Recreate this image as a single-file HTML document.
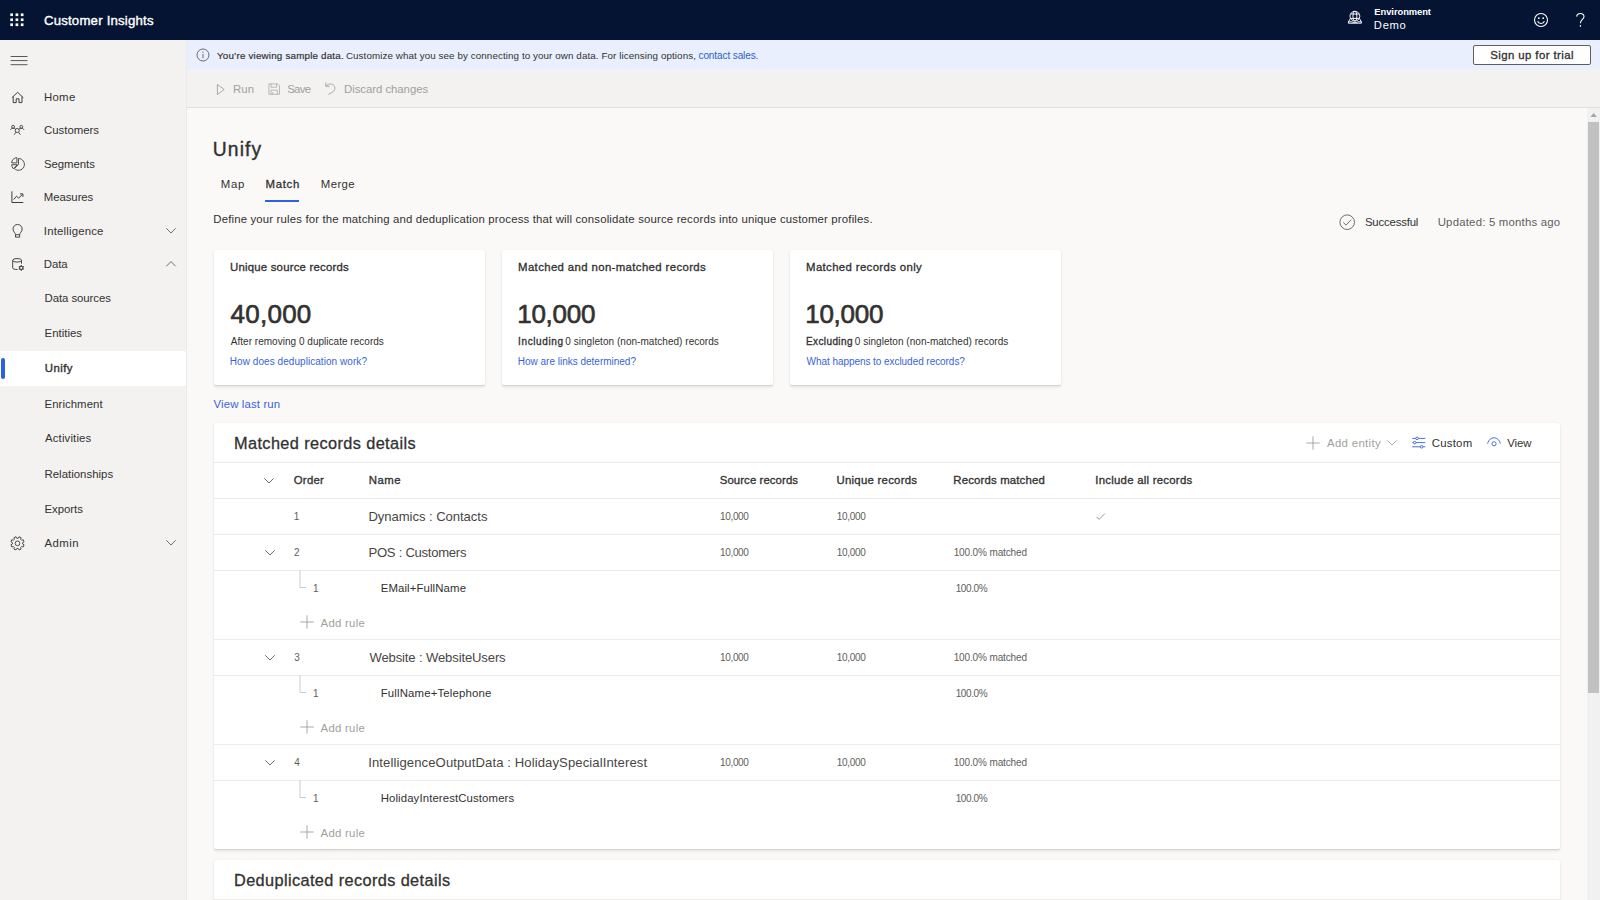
<!DOCTYPE html>
<html><head><meta charset="utf-8"><title>Customer Insights - Unify</title>
<style>
html,body{margin:0;padding:0;width:1600px;height:900px;overflow:hidden;background:#faf9f8;font-family:"Liberation Sans",sans-serif;}
.t{position:absolute;white-space:nowrap;line-height:20px;height:20px;}
.b{position:absolute;}
.i{position:absolute;overflow:visible;}
</style></head><body>
<div class="b" style="left:0px;top:0px;width:1600px;height:40px;background:#041432"></div>
<div class="b" style="left:0px;top:40px;width:187px;height:860px;background:#f3f2f1"></div>
<div class="b" style="left:186px;top:40px;width:1px;height:860px;background:#eceae8"></div>
<div class="b" style="left:187px;top:40px;width:1413px;height:30px;background:#e9effd"></div>
<div class="b" style="left:187px;top:70px;width:1413px;height:37px;background:#f3f2f1"></div>
<div class="b" style="left:187px;top:107px;width:1413px;height:1px;background:#e1dfdd"></div>
<div class="b" style="left:187px;top:108px;width:1413px;height:792px;background:#faf9f8"></div>
<svg class="i" style="left:0px;top:0px" width="40" height="40" viewBox="0 0 40 40" fill="#fff" stroke="none" stroke-width="1" stroke-linecap="butt" stroke-linejoin="miter"><rect x="10.30" y="13.40" width="2.7" height="2.7"/><rect x="10.30" y="18.40" width="2.7" height="2.7"/><rect x="10.30" y="23.40" width="2.7" height="2.7"/><rect x="15.55" y="13.40" width="2.7" height="2.7"/><rect x="15.55" y="18.40" width="2.7" height="2.7"/><rect x="15.55" y="23.40" width="2.7" height="2.7"/><rect x="20.80" y="13.40" width="2.7" height="2.7"/><rect x="20.80" y="18.40" width="2.7" height="2.7"/><rect x="20.80" y="23.40" width="2.7" height="2.7"/></svg>
<div class="t" id="hdr" style="left:43.90px;top:11.43px;font-size:13.2px;color:#fff;letter-spacing:0.213px;-webkit-text-stroke:.38px currentColor;">Customer Insights</div>
<svg class="i" style="left:1347.5px;top:10.5px" width="14" height="13" viewBox="0 0 14 13" fill="none" stroke="#fff" stroke-width="0.95" stroke-linecap="butt" stroke-linejoin="miter"><circle cx="6.9" cy="5.2" r="4.9"/><ellipse cx="6.9" cy="5.2" rx="2" ry="4.9"/><path d="M2.6 3 H11.2 M2.6 7.4 H11.2"/><path d="M2.3 7.6 L0.4 10.8 V12.2 H13.4 V10.8 L11.5 7.6 M0.4 10.8 H3.9 C5 12 8.8 12 9.9 10.8 H13.4"/></svg>
<div class="t" id="env1" style="left:1374.35px;top:1.94px;font-size:9.4px;color:#fff;letter-spacing:-0.065px;font-weight:bold;">Environment</div>
<div class="t" id="env2" style="left:1373.85px;top:15.12px;font-size:11.2px;color:#fff;letter-spacing:0.717px;">Demo</div>
<svg class="i" style="left:1532.7px;top:12px" width="16" height="16" viewBox="0 0 16 16" fill="none" stroke="#fff" stroke-width="1.1" stroke-linecap="butt" stroke-linejoin="miter"><circle cx="8" cy="8" r="6.5"/><path d="M4.6 9.2 C5.6 12.2 10.4 12.2 11.4 9.2" /><circle cx="5.8" cy="6.2" r="0.9" fill="#fff" stroke="none"/><circle cx="10.2" cy="6.2" r="0.9" fill="#fff" stroke="none"/></svg>
<svg class="i" style="left:1576.2px;top:13.2px" width="9" height="14" viewBox="0 0 9 14" fill="none" stroke="#fff" stroke-width="1.1" stroke-linecap="butt" stroke-linejoin="miter"><path d="M0.7 3.6 C0.9 -0.5 8 -0.5 8 3.4 C8 6.3 4.4 6.6 4.4 10.2"/><path d="M4.4 12.1 V13.7"/></svg>
<svg class="i" style="left:10px;top:55px" width="18" height="11" viewBox="0 0 18 11" fill="none" stroke="#484644" stroke-width="0.9" stroke-linecap="butt" stroke-linejoin="miter"><path d="M0.6 1.5H17.5M0.6 5.6H17.5M0.6 9.7H17.5"/></svg>
<div class="b" style="left:0px;top:351px;width:186px;height:35px;background:#fff;border-radius:0 2px 2px 0"></div>
<div class="b" style="left:1.3px;top:358px;width:3.6px;height:20.5px;background:#2a61df;border-radius:2px"></div>
<div class="t" id="nHome" style="left:43.90px;top:86.75px;font-size:11.4px;color:#323130;letter-spacing:0.333px;">Home</div>
<div class="t" id="nCust" style="left:43.95px;top:120.45px;font-size:11.4px;color:#323130;letter-spacing:0.006px;">Customers</div>
<div class="t" id="nSeg" style="left:43.95px;top:153.65px;font-size:11.4px;color:#323130;letter-spacing:-0.050px;">Segments</div>
<div class="t" id="nMea" style="left:43.80px;top:187.05px;font-size:11.4px;color:#323130;letter-spacing:-0.071px;">Measures</div>
<div class="t" id="nInt" style="left:43.80px;top:220.65px;font-size:11.4px;color:#323130;letter-spacing:0.182px;">Intelligence</div>
<div class="t" id="nData" style="left:43.80px;top:253.95px;font-size:11.4px;color:#323130;letter-spacing:-0.050px;">Data</div>
<div class="t" id="sDs" style="left:44.50px;top:288.35px;font-size:11.4px;color:#323130;letter-spacing:-0.064px;">Data sources</div>
<div class="t" id="sEnt" style="left:44.50px;top:323.45px;font-size:11.4px;color:#323130;letter-spacing:0.029px;">Entities</div>
<div class="t" id="sEnr" style="left:44.50px;top:393.55px;font-size:11.4px;color:#323130;letter-spacing:0.056px;">Enrichment</div>
<div class="t" id="sAct" style="left:45.00px;top:427.55px;font-size:11.4px;color:#323130;letter-spacing:0.144px;">Activities</div>
<div class="t" id="sRel" style="left:44.50px;top:463.55px;font-size:11.4px;color:#323130;letter-spacing:0.021px;">Relationships</div>
<div class="t" id="sExp" style="left:44.50px;top:498.75px;font-size:11.4px;color:#323130;letter-spacing:-0.042px;">Exports</div>
<div class="t" id="sUni" style="left:44.75px;top:358.25px;font-size:11.4px;color:#323130;letter-spacing:0.438px;-webkit-text-stroke:.38px currentColor;">Unify</div>
<div class="t" id="nAdm" style="left:44.45px;top:532.65px;font-size:11.4px;color:#323130;letter-spacing:0.438px;">Admin</div>
<svg class="i" style="left:10.5px;top:91px" width="14" height="13" viewBox="0 0 14 13" fill="none" stroke="#403e3c" stroke-width="1" stroke-linecap="butt" stroke-linejoin="miter"><path d="M0.9 6.7 L6.6 1.3 L12.3 6.7"/><path d="M2.2 5.6 V11.6 H5.2 V7.8 H8 V11.6 H11 V5.6"/></svg>
<svg class="i" style="left:10px;top:124px" width="15" height="12" viewBox="0 0 15 12" fill="none" stroke="#403e3c" stroke-width="0.9" stroke-linecap="butt" stroke-linejoin="miter"><circle cx="3.1" cy="2.8" r="1.45"/><circle cx="11.3" cy="2.8" r="1.45"/><path d="M0.4 5.7 C0.9 4.7 1.9 4.3 3.1 4.3 C4.2 4.3 5 4.6 5.7 5.2 M14 5.7 C13.5 4.7 12.5 4.3 11.3 4.3 C10.2 4.3 9.4 4.6 8.7 5.2"/><circle cx="7.2" cy="6.5" r="2.05"/><path d="M5.9 8.2 L4.2 10.7 M8.5 8.2 L10.4 10.7"/></svg>
<svg class="i" style="left:9.6px;top:156.6px" width="15" height="14" viewBox="0 0 15 14" fill="none" stroke="#403e3c" stroke-width="0.9" stroke-linecap="butt" stroke-linejoin="miter"><path d="M8.5 7.4 V1.5 A5.9 5.9 0 1 1 4.33 11.57 Z"/><path d="M7.4 7.7 H1.7 A5.8 5.8 0 0 0 3.35 11.75 Z"/><path d="M6.9 5.9 V0.7 A5.2 5.2 0 0 0 1.7 5.9 Z"/></svg>
<svg class="i" style="left:10.6px;top:190.8px" width="13" height="12.5" viewBox="0 0 13 12.5" fill="none" stroke="#403e3c" stroke-width="1" stroke-linecap="butt" stroke-linejoin="miter"><path d="M0.9 0.3 V11.5 H12.3"/><path d="M2.6 8.6 L5.6 5.2 L7.7 7.2 L11.6 3.2"/><path d="M8.9 2.9 H11.9 V5.9"/></svg>
<svg class="i" style="left:11.5px;top:224.0px" width="11.5" height="14" viewBox="0 0 11.5 14" fill="none" stroke="#403e3c" stroke-width="0.95" stroke-linecap="butt" stroke-linejoin="miter"><path d="M3.5 10.6 C3.5 8.8 1.05 7.9 1.05 5.0 A4.55 4.55 0 0 1 10.15 5.0 C10.15 7.9 7.7 8.8 7.7 10.6 V13.1 H3.5 Z"/><path d="M3.5 10.7 H7.7"/></svg>
<svg class="i" style="left:11.8px;top:257.8px" width="13" height="13.5" viewBox="0 0 13 13.5" fill="none" stroke="#403e3c" stroke-width="0.95" stroke-linecap="butt" stroke-linejoin="miter"><ellipse cx="5.1" cy="2.3" rx="4.4" ry="1.8"/><path d="M0.7 2.3 V9.9 C0.7 10.9 2.6 11.6 5.6 11.5 M9.5 2.3 V5.7"/><path d="M11.36 10.29 L12.06 10.80 L11.46 11.84 L10.67 11.49 L9.99 11.88 L9.90 12.74 L8.70 12.74 L8.61 11.88 L7.93 11.49 L7.14 11.84 L6.54 10.80 L7.24 10.29 L7.24 9.51 L6.54 9.00 L7.14 7.96 L7.93 8.31 L8.61 7.92 L8.70 7.06 L9.90 7.06 L9.99 7.92 L10.67 8.31 L11.46 7.96 L12.06 9.00 L11.36 9.51 Z M8.20 9.90 a1.1 1.1 0 1 0 2.2 0 a1.1 1.1 0 1 0 -2.2 0 Z" fill="#403e3c" stroke="none" fill-rule="evenodd"/></svg>
<svg class="i" style="left:9.7px;top:535.5px" width="15" height="15" viewBox="0 0 15 15" fill="none" stroke="#403e3c" stroke-width="0.9" stroke-linecap="butt" stroke-linejoin="miter"><path d="M12.60 8.04 L14.09 8.82 L13.20 10.97 L11.59 10.47 L10.62 11.44 L11.12 13.05 L8.97 13.94 L8.19 12.45 L6.81 12.45 L6.03 13.94 L3.88 13.05 L4.38 11.44 L3.41 10.47 L1.80 10.97 L0.91 8.82 L2.40 8.04 L2.40 6.66 L0.91 5.88 L1.80 3.73 L3.41 4.23 L4.38 3.26 L3.88 1.65 L6.03 0.76 L6.81 2.25 L8.19 2.25 L8.97 0.76 L11.12 1.65 L10.62 3.26 L11.59 4.23 L13.20 3.73 L14.09 5.88 L12.60 6.66 Z" stroke-linejoin="round"/><circle cx="7.5" cy="7.35" r="2.35"/></svg>
<svg class="i" style="left:165px;top:227px" width="12" height="8" viewBox="0 0 12 8" fill="none" stroke="#605e5c" stroke-width="0.9" stroke-linecap="butt" stroke-linejoin="miter"><path d="M1.3 1.3 L6 6 L10.7 1.3"/></svg>
<svg class="i" style="left:165px;top:260.2px" width="12" height="8" viewBox="0 0 12 8" fill="none" stroke="#605e5c" stroke-width="0.9" stroke-linecap="butt" stroke-linejoin="miter"><path d="M1.3 6.3 L6 1.6 L10.7 6.3"/></svg>
<svg class="i" style="left:165px;top:539.2px" width="12" height="8" viewBox="0 0 12 8" fill="none" stroke="#605e5c" stroke-width="0.9" stroke-linecap="butt" stroke-linejoin="miter"><path d="M1.3 1.3 L6 6 L10.7 1.3"/></svg>
<svg class="i" style="left:195.8px;top:48px" width="14" height="14" viewBox="0 0 14 14" fill="none" stroke="#605e5c" stroke-width="0.9" stroke-linecap="butt" stroke-linejoin="miter"><circle cx="7" cy="7" r="6"/><path d="M7 6 V10.3 M7 3.7 V4.9"/></svg>
<div class="t" id="bn1" style="left:217.00px;top:45.60px;font-size:9.8px;color:#323130;letter-spacing:0.192px;-webkit-text-stroke:.18px currentColor;">You&#8217;re viewing sample data.</div>
<div class="t" id="bn2" style="left:345.90px;top:45.60px;font-size:9.8px;color:#323130;letter-spacing:0.091px;">Customize what you see by connecting to your own data. For licensing options,</div>
<div class="t" id="bn3" style="left:698.50px;top:45.53px;font-size:10px;color:#2b62c8;letter-spacing:-0.096px;">contact sales.</div>
<div class="b" style="left:1473px;top:45px;width:118px;height:19.5px;background:#fff;border:1px solid #605e5c;border-radius:2px;box-sizing:border-box"></div>
<div class="t" id="bn4" style="left:1490.30px;top:45.05px;font-size:11.4px;color:#323130;letter-spacing:0.409px;-webkit-text-stroke:.32px currentColor;">Sign up for trial</div>
<svg class="i" style="left:216px;top:82.5px" width="10" height="13" viewBox="0 0 10 13" fill="none" stroke="#a19f9d" stroke-width="0.9" stroke-linecap="butt" stroke-linejoin="miter"><path d="M1.4 1.4 L8.2 6.5 L1.4 11.6 Z"/></svg>
<div class="t" id="tbRun" style="left:232.90px;top:78.95px;font-size:11.4px;color:#a19f9d;letter-spacing:0.200px;">Run</div>
<svg class="i" style="left:267.6px;top:83px" width="12.5" height="12.5" viewBox="0 0 12.5 12.5" fill="none" stroke="#b3b0ad" stroke-width="0.9" stroke-linecap="butt" stroke-linejoin="miter"><path d="M0.9 0.9 H9.6 L11.5 2.8 V11.3 H0.9 Z"/><path d="M3 0.9 V4.2 H8.7 V0.9 M3 11.3 V7.2 H9.4 V11.3 M4.8 9 V11.3"/></svg>
<div class="t" id="tbSave" style="left:287.15px;top:78.95px;font-size:11.4px;color:#a19f9d;letter-spacing:-0.650px;">Save</div>
<svg class="i" style="left:325.3px;top:82px" width="11" height="13" viewBox="0 0 11 13" fill="none" stroke="#a19f9d" stroke-width="0.9" stroke-linecap="butt" stroke-linejoin="miter"><path d="M0.8 0.5 V4.3 H4.6"/><path d="M1 4.1 C3.6 0.6 9.9 1.6 9.9 6.2 C9.9 9 7.2 10.6 3.4 12.3"/></svg>
<div class="t" id="tbDis" style="left:344.00px;top:78.95px;font-size:11.4px;color:#a19f9d;letter-spacing:-0.050px;">Discard changes</div>
<div class="t" id="title" style="left:212.75px;top:130.21px;font-size:19.3px;color:#323130;letter-spacing:1.125px;-webkit-text-stroke:.38px currentColor;line-height:40px;height:40px;">Unify</div>
<div class="t" id="tabMap" style="left:220.80px;top:174.25px;font-size:11.4px;color:#323130;letter-spacing:0.750px;">Map</div>
<div class="t" id="tabMatch" style="left:265.60px;top:174.25px;font-size:11.4px;color:#323130;letter-spacing:0.675px;-webkit-text-stroke:.3px currentColor;">Match</div>
<div class="t" id="tabMerge" style="left:320.75px;top:174.25px;font-size:11.4px;color:#323130;letter-spacing:0.413px;">Merge</div>
<div class="b" style="left:265.4px;top:200px;width:34.1px;height:2px;background:#2a62e0"></div>
<div class="t" id="desc" style="left:213.25px;top:208.95px;font-size:11.4px;color:#323130;letter-spacing:0.161px;">Define your rules for the matching and deduplication process that will consolidate source records into unique customer profiles.</div>
<svg class="i" style="left:1339.3px;top:213.8px" width="16.4" height="16.4" viewBox="0 0 16.4 16.4" fill="none" stroke="#605e5c" stroke-width="0.9" stroke-linecap="butt" stroke-linejoin="miter"><circle cx="8.2" cy="8.2" r="7.3"/><path d="M4.2 8.4 L7.0 11.1 L12.3 5.7"/></svg>
<div class="t" id="stSucc" style="left:1364.90px;top:212.35px;font-size:11.4px;color:#323130;letter-spacing:-0.183px;">Successful</div>
<div class="t" id="stUpd" style="left:1437.70px;top:212.35px;font-size:11.4px;color:#605e5c;letter-spacing:0.203px;">Updated: 5 months ago</div>
<div class="b" style="left:214px;top:250px;width:271px;height:135px;background:#fff;border-radius:2px;box-shadow:0 1.3px 3px rgba(0,0,0,.10),0 .3px .8px rgba(0,0,0,.08);"></div>
<div class="t" id="c0t" style="left:230.05px;top:257.05px;font-size:11.4px;color:#323130;letter-spacing:0.200px;-webkit-text-stroke:.32px currentColor;">Unique source records</div>
<div class="t" id="c0n" style="left:230.55px;top:294.39px;font-size:26.0px;color:#323130;letter-spacing:0.250px;-webkit-text-stroke:.65px currentColor;line-height:40px;height:40px;">40,000</div>
<div class="t" id="c0s0" style="left:230.80px;top:331.53px;font-size:10px;color:#323130;letter-spacing:0.023px;">After removing 0 duplicate records</div>
<div class="t" id="c0l" style="left:229.80px;top:351.53px;font-size:10px;color:#3a63d8;letter-spacing:0.056px;">How does deduplication work?</div>
<div class="b" style="left:502px;top:250px;width:271px;height:135px;background:#fff;border-radius:2px;box-shadow:0 1.3px 3px rgba(0,0,0,.10),0 .3px .8px rgba(0,0,0,.08);"></div>
<div class="t" id="c1t" style="left:518.05px;top:257.05px;font-size:11.4px;color:#323130;letter-spacing:0.367px;-webkit-text-stroke:.32px currentColor;">Matched and non-matched records</div>
<div class="t" id="c1n" style="left:517.20px;top:294.39px;font-size:26.0px;color:#323130;letter-spacing:-0.250px;-webkit-text-stroke:.65px currentColor;line-height:40px;height:40px;">10,000</div>
<div class="t" id="c1s0" style="left:518.05px;top:331.53px;font-size:10px;color:#323130;letter-spacing:0.625px;-webkit-text-stroke:.32px currentColor;">Including</div>
<div class="t" id="c1s1" style="left:565.30px;top:331.53px;font-size:10px;color:#323130;letter-spacing:0.039px;">0 singleton (non-matched) records</div>
<div class="t" id="c1l" style="left:517.80px;top:351.53px;font-size:10px;color:#3a63d8;letter-spacing:-0.010px;">How are links determined?</div>
<div class="b" style="left:790px;top:250px;width:271px;height:135px;background:#fff;border-radius:2px;box-shadow:0 1.3px 3px rgba(0,0,0,.10),0 .3px .8px rgba(0,0,0,.08);"></div>
<div class="t" id="c2t" style="left:806.05px;top:257.05px;font-size:11.4px;color:#323130;letter-spacing:0.358px;-webkit-text-stroke:.32px currentColor;">Matched records only</div>
<div class="t" id="c2n" style="left:805.20px;top:294.39px;font-size:26.0px;color:#323130;letter-spacing:-0.250px;-webkit-text-stroke:.65px currentColor;line-height:40px;height:40px;">10,000</div>
<div class="t" id="c2s0" style="left:806.05px;top:331.53px;font-size:10px;color:#323130;letter-spacing:0.381px;-webkit-text-stroke:.32px currentColor;">Excluding</div>
<div class="t" id="c2s1" style="left:854.75px;top:331.53px;font-size:10px;color:#323130;letter-spacing:0.039px;">0 singleton (non-matched) records</div>
<div class="t" id="c2l" style="left:806.55px;top:351.53px;font-size:10px;color:#3a63d8;letter-spacing:-0.055px;">What happens to excluded records?</div>
<div class="t" id="vlr" style="left:213.55px;top:394.05px;font-size:11.4px;color:#3a63d8;letter-spacing:0.133px;">View last run</div>
<div class="b" style="left:214px;top:423px;width:1346px;height:426px;background:#fff;border-radius:2px;box-shadow:0 1.3px 3px rgba(0,0,0,.10),0 .3px .8px rgba(0,0,0,.08);"></div>
<div class="t" id="mrd" style="left:234.00px;top:422.75px;font-size:16.3px;color:#323130;letter-spacing:0.400px;-webkit-text-stroke:.3px currentColor;line-height:40px;height:40px;">Matched records details</div>
<div class="b" style="left:214px;top:462px;width:1346px;height:1px;background:#edebe9"></div>
<div class="b" style="left:214px;top:498px;width:1346px;height:1px;background:#edebe9"></div>
<div class="b" style="left:214px;top:534px;width:1346px;height:1px;background:#edebe9"></div>
<div class="b" style="left:214px;top:570px;width:1346px;height:1px;background:#edebe9"></div>
<div class="b" style="left:214px;top:639px;width:1346px;height:1px;background:#edebe9"></div>
<div class="b" style="left:214px;top:675px;width:1346px;height:1px;background:#edebe9"></div>
<div class="b" style="left:214px;top:744px;width:1346px;height:1px;background:#edebe9"></div>
<div class="b" style="left:214px;top:780px;width:1346px;height:1px;background:#edebe9"></div>
<svg class="i" style="left:1306px;top:436px" width="14" height="14" viewBox="0 0 14 14" fill="none" stroke="#a19f9d" stroke-width="0.9" stroke-linecap="butt" stroke-linejoin="miter"><path d="M7 0.3 V13.7 M0.3 7 H13.7"/></svg>
<div class="t" id="addEnt" style="left:1327.00px;top:432.85px;font-size:11.4px;color:#a19f9d;letter-spacing:0.328px;">Add entity</div>
<svg class="i" style="left:1386px;top:439px" width="12" height="8" viewBox="0 0 12 8" fill="none" stroke="#a19f9d" stroke-width="0.9" stroke-linecap="butt" stroke-linejoin="miter"><path d="M1.3 1.3 L6 6 L10.7 1.3"/></svg>
<svg class="i" style="left:1412px;top:436px" width="13.6" height="13" viewBox="0 0 13.6 13" fill="none" stroke="#3a63d8" stroke-width="0.9" stroke-linecap="butt" stroke-linejoin="miter"><path d="M0.3 2.4 H13.3 M0.3 6.6 H13.3 M0.3 10.8 H13.3"/><circle cx="5.1" cy="2.4" r="1.3" fill="#fff"/><circle cx="2.7" cy="6.6" r="1.3" fill="#fff"/><circle cx="9.6" cy="10.8" r="1.3" fill="#fff"/></svg>
<div class="t" id="custom" style="left:1431.85px;top:432.85px;font-size:11.4px;color:#323130;letter-spacing:0.210px;">Custom</div>
<svg class="i" style="left:1486.5px;top:436.6px" width="14" height="12" viewBox="0 0 14 12" fill="none" stroke="#3a63d8" stroke-width="0.9" stroke-linecap="butt" stroke-linejoin="miter"><path d="M0.6 6.6 C1.6 2.6 4.4 0.8 7 0.8 C9.6 0.8 12.4 2.6 13.4 6.6"/><circle cx="7" cy="6.8" r="2.1"/></svg>
<div class="t" id="view" style="left:1507.35px;top:432.85px;font-size:11.4px;color:#323130;letter-spacing:-0.150px;">View</div>
<svg class="i" style="left:263px;top:477px" width="12" height="8" viewBox="0 0 12 8" fill="none" stroke="#605e5c" stroke-width="0.9" stroke-linecap="butt" stroke-linejoin="miter"><path d="M1.3 1.3 L6 6 L10.7 1.3"/></svg>
<div class="t" id="hOrder" style="left:293.75px;top:469.55px;font-size:11.4px;color:#323130;letter-spacing:0.250px;-webkit-text-stroke:.32px currentColor;">Order</div>
<div class="t" id="hName" style="left:368.70px;top:469.55px;font-size:11.4px;color:#323130;letter-spacing:0.500px;-webkit-text-stroke:.32px currentColor;">Name</div>
<div class="t" id="hSrc" style="left:719.75px;top:469.55px;font-size:11.4px;color:#323130;letter-spacing:0.077px;-webkit-text-stroke:.32px currentColor;">Source records</div>
<div class="t" id="hUni" style="left:836.50px;top:469.55px;font-size:11.4px;color:#323130;letter-spacing:0.250px;-webkit-text-stroke:.32px currentColor;">Unique records</div>
<div class="t" id="hRec" style="left:953.25px;top:469.55px;font-size:11.4px;color:#323130;letter-spacing:0.164px;-webkit-text-stroke:.32px currentColor;">Records matched</div>
<div class="t" id="hInc" style="left:1095.25px;top:469.55px;font-size:11.4px;color:#323130;letter-spacing:0.250px;-webkit-text-stroke:.32px currentColor;">Include all records</div>
<div class="t" id="r498n" style="left:293.70px;top:507.33px;font-size:10px;color:#605e5c;letter-spacing:0.000px;">1</div>
<div class="t" id="r498name" style="left:368.45px;top:507.06px;font-size:13.1px;color:#484644;letter-spacing:-0.058px;">Dynamics : Contacts</div>
<div class="t" id="r498s" style="left:720.05px;top:506.54px;font-size:10px;color:#605e5c;letter-spacing:-0.350px;">10,000</div>
<div class="t" id="r498u" style="left:836.70px;top:506.54px;font-size:10px;color:#605e5c;letter-spacing:-0.300px;">10,000</div>
<svg class="i" style="left:1095.5px;top:512.5px" width="10" height="8" viewBox="0 0 10 8" fill="none" stroke="#8a8886" stroke-width="0.9" stroke-linecap="butt" stroke-linejoin="miter"><path d="M0.6 3.9 L3.1 6.4 L8.9 0.6"/></svg>
<svg class="i" style="left:264px;top:549px" width="12" height="8" viewBox="0 0 12 8" fill="none" stroke="#605e5c" stroke-width="0.9" stroke-linecap="butt" stroke-linejoin="miter"><path d="M1.3 1.3 L6 6 L10.7 1.3"/></svg>
<div class="t" id="r534n" style="left:293.95px;top:543.34px;font-size:10px;color:#605e5c;letter-spacing:0.000px;">2</div>
<div class="t" id="r534name" style="left:368.45px;top:543.06px;font-size:13.1px;color:#484644;letter-spacing:-0.271px;">POS : Customers</div>
<div class="t" id="r534s" style="left:720.05px;top:542.54px;font-size:10px;color:#605e5c;letter-spacing:-0.350px;">10,000</div>
<div class="t" id="r534u" style="left:836.70px;top:542.54px;font-size:10px;color:#605e5c;letter-spacing:-0.300px;">10,000</div>
<div class="t" id="r534m" style="left:953.70px;top:542.54px;font-size:10px;color:#605e5c;letter-spacing:-0.135px;">100.0% matched</div>
<svg class="i" style="left:299px;top:570px" width="8" height="19" viewBox="0 0 8 19" fill="none" stroke="#c8c6c4" stroke-width="0.9" stroke-linecap="butt" stroke-linejoin="miter"><path d="M1 0 V17.5 H7"/></svg>
<div class="t" id="r534sn" style="left:313.05px;top:578.54px;font-size:10px;color:#605e5c;letter-spacing:0.000px;">1</div>
<div class="t" id="r534sname" style="left:380.70px;top:578.25px;font-size:11.4px;color:#323130;letter-spacing:0.108px;">EMail+FullName</div>
<div class="t" id="r534sp" style="left:955.70px;top:578.54px;font-size:10px;color:#605e5c;letter-spacing:-0.400px;">100.0%</div>
<svg class="i" style="left:300px;top:615.3px" width="14" height="14" viewBox="0 0 14 14" fill="none" stroke="#a19f9d" stroke-width="0.9" stroke-linecap="butt" stroke-linejoin="miter"><path d="M7 0.3 V13.7 M0.3 7 H13.7"/></svg>
<div class="t" id="r534add" style="left:320.55px;top:612.65px;font-size:11.4px;color:#a19f9d;letter-spacing:0.264px;">Add rule</div>
<svg class="i" style="left:264px;top:654px" width="12" height="8" viewBox="0 0 12 8" fill="none" stroke="#605e5c" stroke-width="0.9" stroke-linecap="butt" stroke-linejoin="miter"><path d="M1.3 1.3 L6 6 L10.7 1.3"/></svg>
<div class="t" id="r639n" style="left:294.20px;top:648.34px;font-size:10px;color:#605e5c;letter-spacing:0.000px;">3</div>
<div class="t" id="r639name" style="left:369.45px;top:648.06px;font-size:13.1px;color:#484644;letter-spacing:-0.143px;">Website : WebsiteUsers</div>
<div class="t" id="r639s" style="left:720.05px;top:647.54px;font-size:10px;color:#605e5c;letter-spacing:-0.350px;">10,000</div>
<div class="t" id="r639u" style="left:836.70px;top:647.54px;font-size:10px;color:#605e5c;letter-spacing:-0.300px;">10,000</div>
<div class="t" id="r639m" style="left:953.70px;top:647.54px;font-size:10px;color:#605e5c;letter-spacing:-0.135px;">100.0% matched</div>
<svg class="i" style="left:299px;top:675px" width="8" height="19" viewBox="0 0 8 19" fill="none" stroke="#c8c6c4" stroke-width="0.9" stroke-linecap="butt" stroke-linejoin="miter"><path d="M1 0 V17.5 H7"/></svg>
<div class="t" id="r639sn" style="left:313.05px;top:683.54px;font-size:10px;color:#605e5c;letter-spacing:0.000px;">1</div>
<div class="t" id="r639sname" style="left:380.70px;top:683.25px;font-size:11.4px;color:#323130;letter-spacing:0.159px;">FullName+Telephone</div>
<div class="t" id="r639sp" style="left:955.70px;top:683.54px;font-size:10px;color:#605e5c;letter-spacing:-0.400px;">100.0%</div>
<svg class="i" style="left:300px;top:720.3px" width="14" height="14" viewBox="0 0 14 14" fill="none" stroke="#a19f9d" stroke-width="0.9" stroke-linecap="butt" stroke-linejoin="miter"><path d="M7 0.3 V13.7 M0.3 7 H13.7"/></svg>
<div class="t" id="r639add" style="left:320.55px;top:717.65px;font-size:11.4px;color:#a19f9d;letter-spacing:0.264px;">Add rule</div>
<svg class="i" style="left:264px;top:759px" width="12" height="8" viewBox="0 0 12 8" fill="none" stroke="#605e5c" stroke-width="0.9" stroke-linecap="butt" stroke-linejoin="miter"><path d="M1.3 1.3 L6 6 L10.7 1.3"/></svg>
<div class="t" id="r744n" style="left:294.20px;top:753.34px;font-size:10px;color:#605e5c;letter-spacing:0.000px;">4</div>
<div class="t" id="r744name" style="left:368.20px;top:753.06px;font-size:13.1px;color:#484644;letter-spacing:0.097px;">IntelligenceOutputData : HolidaySpecialInterest</div>
<div class="t" id="r744s" style="left:720.05px;top:752.54px;font-size:10px;color:#605e5c;letter-spacing:-0.350px;">10,000</div>
<div class="t" id="r744u" style="left:836.70px;top:752.54px;font-size:10px;color:#605e5c;letter-spacing:-0.300px;">10,000</div>
<div class="t" id="r744m" style="left:953.70px;top:752.54px;font-size:10px;color:#605e5c;letter-spacing:-0.135px;">100.0% matched</div>
<svg class="i" style="left:299px;top:780px" width="8" height="19" viewBox="0 0 8 19" fill="none" stroke="#c8c6c4" stroke-width="0.9" stroke-linecap="butt" stroke-linejoin="miter"><path d="M1 0 V17.5 H7"/></svg>
<div class="t" id="r744sn" style="left:313.05px;top:788.54px;font-size:10px;color:#605e5c;letter-spacing:0.000px;">1</div>
<div class="t" id="r744sname" style="left:380.70px;top:788.25px;font-size:11.4px;color:#323130;letter-spacing:0.107px;">HolidayInterestCustomers</div>
<div class="t" id="r744sp" style="left:955.70px;top:788.54px;font-size:10px;color:#605e5c;letter-spacing:-0.400px;">100.0%</div>
<svg class="i" style="left:300px;top:825.3px" width="14" height="14" viewBox="0 0 14 14" fill="none" stroke="#a19f9d" stroke-width="0.9" stroke-linecap="butt" stroke-linejoin="miter"><path d="M7 0.3 V13.7 M0.3 7 H13.7"/></svg>
<div class="t" id="r744add" style="left:320.55px;top:822.65px;font-size:11.4px;color:#a19f9d;letter-spacing:0.264px;">Add rule</div>
<div class="b" style="left:214px;top:860px;width:1346px;height:60px;background:#fff;border-radius:2px;box-shadow:0 1.3px 3px rgba(0,0,0,.10),0 .3px .8px rgba(0,0,0,.08);"></div>
<div class="t" id="ded" style="left:234.00px;top:860.35px;font-size:16.3px;color:#323130;letter-spacing:0.394px;-webkit-text-stroke:.3px currentColor;line-height:40px;height:40px;">Deduplicated records details</div>
<div class="b" style="left:214px;top:899px;width:1346px;height:1px;background:#edebe9"></div>
<div class="b" style="left:1587px;top:108px;width:13px;height:792px;background:#f1f1f1"></div>
<div class="b" style="left:1588.3px;top:122px;width:10.7px;height:571px;background:#c1c1c1"></div>
<svg class="i" style="left:1587px;top:108px" width="13" height="14" viewBox="0 0 13 14" fill="#a3a3a3" stroke="none" stroke-width="1" stroke-linecap="butt" stroke-linejoin="miter"><path d="M3.6 9.1 L6.7 4.9 L9.8 9.1 Z"/></svg>
</body></html>
